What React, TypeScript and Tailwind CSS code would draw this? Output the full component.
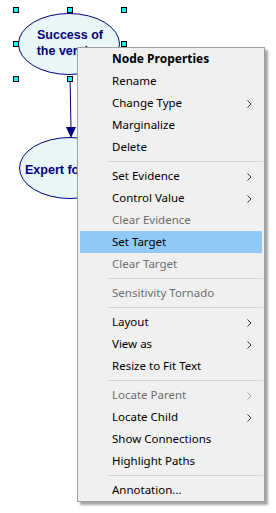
import React from "react";

type Item =
  | { type: "sep" }
  | { type: "item"; label: string; bold?: boolean; disabled?: boolean; sub?: boolean; active?: boolean };

const items: Item[] = [
  { type: "item", label: "Node Properties", bold: true },
  { type: "item", label: "Rename" },
  { type: "item", label: "Change Type", sub: true },
  { type: "item", label: "Marginalize" },
  { type: "item", label: "Delete" },
  { type: "sep" },
  { type: "item", label: "Set Evidence", sub: true },
  { type: "item", label: "Control Value", sub: true },
  { type: "item", label: "Clear Evidence", disabled: true },
  { type: "item", label: "Set Target", active: true },
  { type: "item", label: "Clear Target", disabled: true },
  { type: "sep" },
  { type: "item", label: "Sensitivity Tornado", disabled: true },
  { type: "sep" },
  { type: "item", label: "Layout", sub: true },
  { type: "item", label: "View as", sub: true },
  { type: "item", label: "Resize to Fit Text" },
  { type: "sep" },
  { type: "item", label: "Locate Parent", sub: true, disabled: true },
  { type: "item", label: "Locate Child", sub: true },
  { type: "item", label: "Show Connections" },
  { type: "item", label: "Highlight Paths" },
  { type: "sep" },
  { type: "item", label: "Annotation..." },
];

function Chevron({ disabled }: { disabled?: boolean }) {
  return (
    <svg width="5" height="8" viewBox="0 0 5 8" className="absolute right-[10px] top-[8px]">
      <path d="M0.5 0.5 L4 4 L0.5 7.5" fill="none" stroke={disabled ? "#a0a0a0" : "#333"} strokeWidth="1" />
    </svg>
  );
}

function Handle({ x, y }: { x: number; y: number }) {
  return <rect x={x + 0.5} y={y + 0.5} width={5} height={5} fill="#00ffff" stroke="#000" strokeWidth={1} />;
}

export default function App() {
  return (
    <div className="relative w-[276px] h-[513px] bg-white overflow-hidden" style={{ fontFamily: "'Noto Sans', sans-serif" }}>
      <svg width="276" height="513" className="absolute left-0 top-0">
        <ellipse cx="69" cy="44" rx="50.5" ry="30.5" fill="#e8f6f8" stroke="#000080" strokeWidth="1" />
        <ellipse cx="70" cy="168" rx="50.5" ry="30.5" fill="#e8f6f8" stroke="#000080" strokeWidth="1" />
        <line x1="70" y1="76" x2="71" y2="130" stroke="#000080" strokeWidth="1" />
        <polygon points="66,127 76,127 71,138" fill="#000080" />
        <text x="70" y="39" textAnchor="middle" fill="#000080" fontFamily="'Liberation Sans', Arial, sans-serif" fontWeight="bold" fontSize="12.5">Success of</text>
        <text x="70" y="55" textAnchor="middle" fill="#000080" fontFamily="'Liberation Sans', Arial, sans-serif" fontWeight="bold" fontSize="12.5">the version</text>
        <text x="25" y="174" fill="#000080" fontFamily="'Liberation Sans', Arial, sans-serif" fontWeight="bold" fontSize="12.5">Expert forecast</text>
        <Handle x={13} y={7} />
        <Handle x={67} y={7} />
        <Handle x={121} y={7} />
        <Handle x={13} y={41} />
        <Handle x={121} y={41} />
        <Handle x={13} y={76} />
        <Handle x={67} y={76} />
      </svg>

      <div className="absolute left-[77px] top-[47px] w-[188px] border border-[#a0a0a0] bg-[#f0f0f0] shadow-[3px_3px_2px_rgba(0,0,0,0.35)] flex flex-col text-[11.5px]">
        {items.map((it, i) =>
          it.type === "sep" ? (
            <div key={i} className="h-[7px] flex items-center pl-[30px] pr-[1px]">
              <div className="h-px w-full bg-[#d4d4d4]" />
            </div>
          ) : (
            <div key={i} className="px-[2px]">
              <div
                className={
                  "relative h-[22px] flex items-center pl-[32px] leading-none " +
                  (it.active ? "bg-[#91c9f7] " : "") +
                  (it.disabled ? "text-[#6d6d6d] " : "text-black ") +
                  (it.bold ? "font-bold text-[12px]" : "")
                }
              >
                {it.label}
                {it.sub && <Chevron disabled={it.disabled} />}
              </div>
            </div>
          )
        )}
      </div>
    </div>
  );
}
